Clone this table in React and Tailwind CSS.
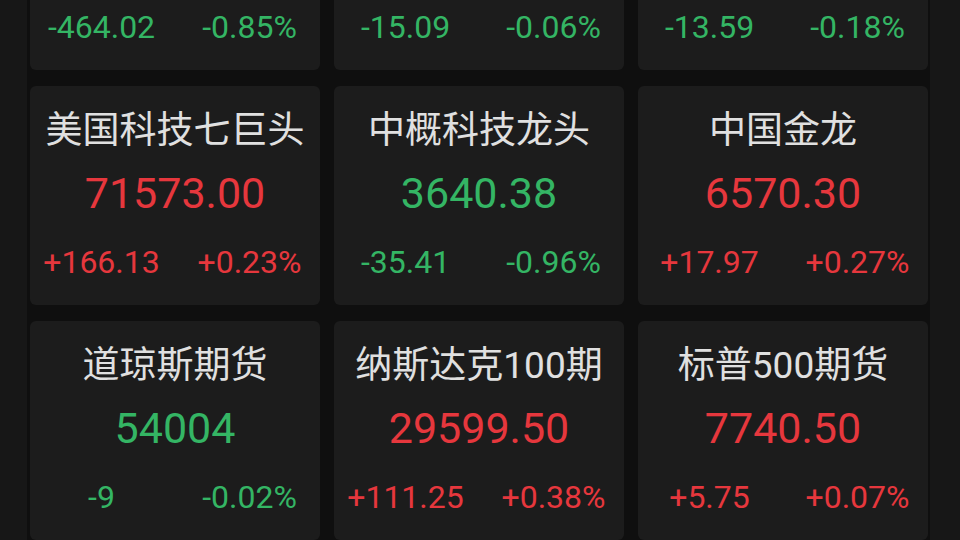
const quotes = [
  { name: '', price: '', change: '-464.02', pct: '-0.85%', up: false },
  { name: '', price: '', change: '-15.09', pct: '-0.06%', up: false },
  { name: '', price: '', change: '-13.59', pct: '-0.18%', up: false },
  { name: '美国科技七巨头', price: '71573.00', change: '+166.13', pct: '+0.23%', up: true },
  { name: '中概科技龙头', price: '3640.38', change: '-35.41', pct: '-0.96%', up: false },
  { name: '中国金龙', price: '6570.30', change: '+17.97', pct: '+0.27%', up: true },
  { name: '道琼斯期货', price: '54004', change: '-9', pct: '-0.02%', up: false },
  { name: '纳斯达克100期', price: '29599.50', change: '+111.25', pct: '+0.38%', up: true },
  { name: '标普500期货', price: '7740.50', change: '+5.75', pct: '+0.07%', up: true },
]

function QuoteCard({ q }) {
  const color = q.up ? 'text-[#e6373d]' : 'text-[#34b564]'
  return (
    <div className="h-[219px] rounded-[6px] bg-[#1c1c1c] flex flex-col">
      <div className="h-[72px] pt-[16px] flex items-center justify-center text-[37px] leading-none text-[#e0e0e0]">
        {q.name}
      </div>
      <div className={`h-[70px] flex items-center justify-center text-[43px] leading-none ${color}`}>
        {q.price}
      </div>
      <div className={`h-[68px] grid grid-cols-2 items-center text-[32px] leading-none ${color}`}>
        <span className="text-center pr-[2px]">{q.change}</span>
        <span className="text-center pl-[4px]">{q.pct}</span>
      </div>
    </div>
  )
}

export default function App() {
  return (
    <div
      className="w-[960px] h-[540px] overflow-hidden bg-[#171717] flex"
      style={{ fontFamily: 'Roboto, "Noto Sans CJK SC", sans-serif' }}
    >
      <div className="ml-[27px] w-[903px] bg-[#0f0f0f] px-[3px] -mt-[149px]">
        <div className="grid grid-cols-3 gap-x-[14px] gap-y-[16px] w-[898px]">
          {quotes.map((q, i) => (
            <QuoteCard key={i} q={q} />
          ))}
        </div>
      </div>
    </div>
  )
}
